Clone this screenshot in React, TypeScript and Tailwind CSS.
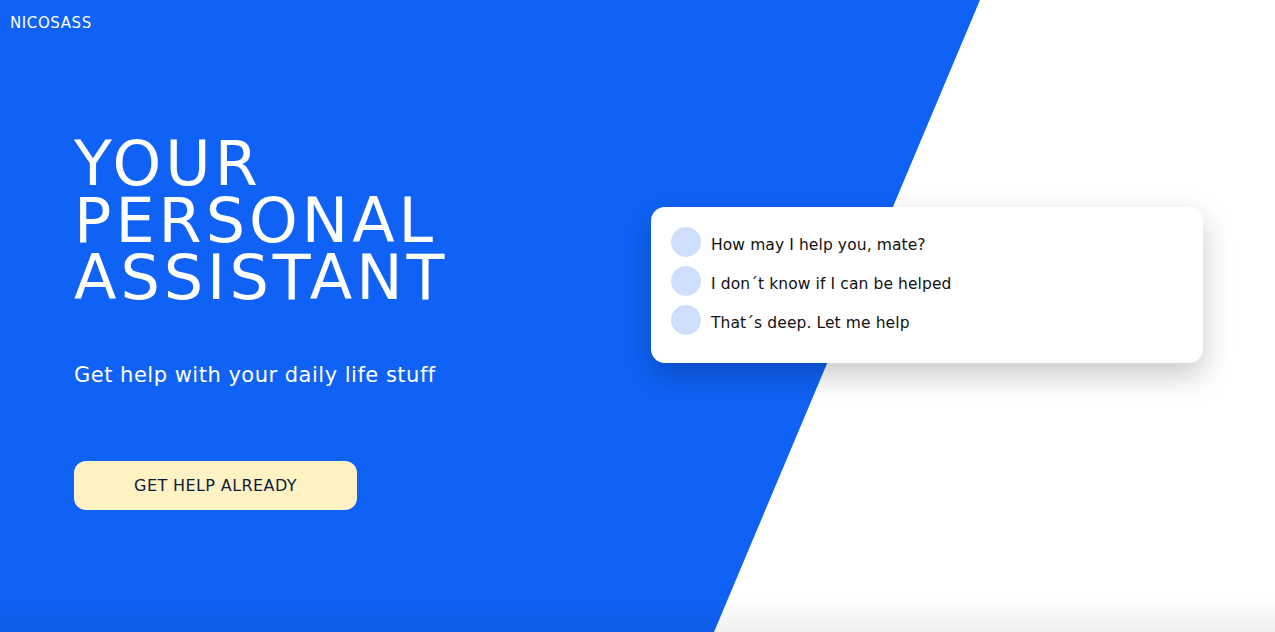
import type { ReactNode } from "react";

const FONT = "font-['DejaVu_Sans',sans-serif]";

const messages = [
  "How may I help you, mate?",
  "I don´t know if I can be helped",
  "That´s deep. Let me help",
];

const ChatRow = ({ children }: { children: ReactNode }) => (
  <div className="flex items-center gap-[10px]">
    <span className="h-[30px] w-[30px] shrink-0 rounded-full bg-[#cfdffb]" />
    <span className="pt-[5px] text-[15.5px] leading-5 tracking-[0.1px] text-[#111]">{children}</span>
  </div>
);

const ChatCard = () => (
  <div className="flex w-[552px] flex-col gap-[9px] rounded-[14px] bg-white pb-[28px] pl-[20px] pr-5 pt-[20px] shadow-[0_12px_30px_rgba(0,0,0,0.22)]">
    {messages.map((m) => (
      <ChatRow key={m}>{m}</ChatRow>
    ))}
  </div>
);

export default function App() {
  return (
    <section className={`relative h-[632px] w-full overflow-hidden bg-white ${FONT}`}>
      {/* diagonal blue backdrop */}
      <svg className="absolute inset-0 h-full w-full" viewBox="0 0 1275 632" preserveAspectRatio="none">
        <polygon points="0,0 980,0 714,632 0,632" fill="#0f62f5" />
      </svg>
      <div className="pointer-events-none absolute inset-x-0 bottom-0 h-[36px] bg-gradient-to-b from-transparent to-black/[0.06]" />

      <div className="relative flex h-full flex-col">
        <header className="px-[10px] pt-[13px] text-[15px] font-medium leading-5 tracking-[0.6px] text-white">NICOSASS</header>

        <div className="flex flex-1 items-start">
          <div className="flex flex-col pl-[74px] pt-[102px]">
            <h1 className="text-[62px] font-normal uppercase leading-[57px] tracking-[4px] text-white">
              Your
              <br />
              Personal
              <br />
              Assistant
            </h1>
            <p className="mt-[55px] text-[21px] font-medium leading-7 tracking-[0.5px] text-white">
              Get help with your daily life stuff
            </p>
            <button
              type="button"
              className="mt-[72px] h-[49px] w-[283px] rounded-[12px] bg-[#fff3c4] text-[16px] uppercase tracking-[0.4px] text-[#0d1b3e]"
            >
              Get help already
            </button>
          </div>

          <div className="ml-auto mr-[72px] pt-[174px]">
            <ChatCard />
          </div>
        </div>
      </div>
    </section>
  );
}
